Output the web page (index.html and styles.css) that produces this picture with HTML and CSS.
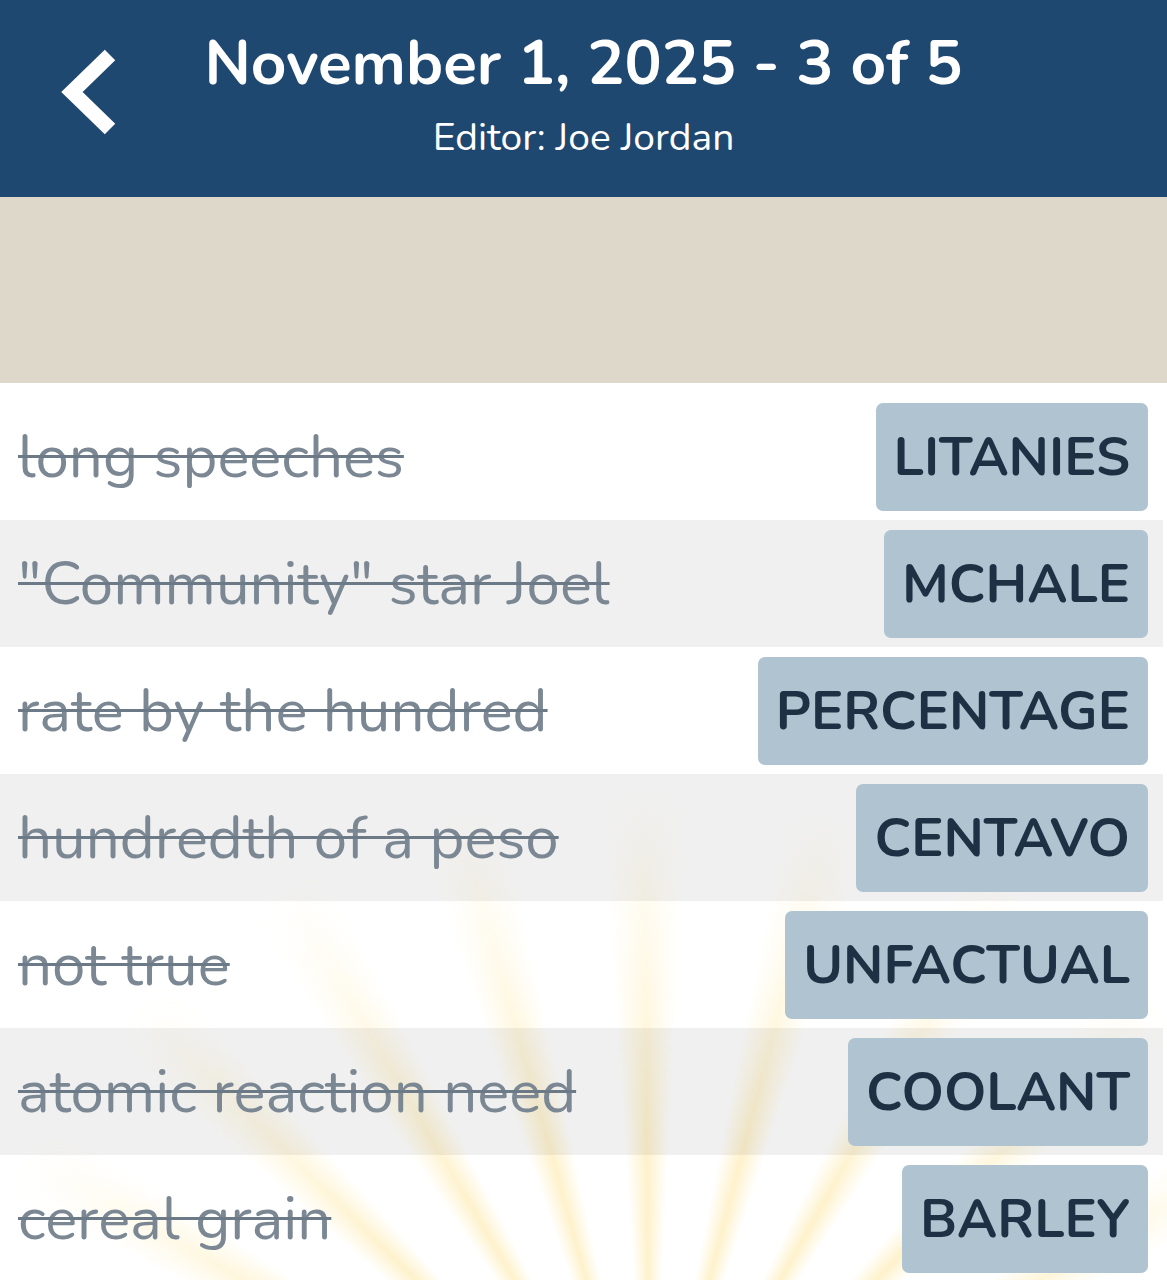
FILE: index.html
```html
<!DOCTYPE html>
<html>
<head>
<meta charset="utf-8">
<link rel="stylesheet" href="styles.css">
</head>
<body>
<header class="topbar">
  <button class="back" aria-label="Back">
    <svg width="60" height="90" viewBox="0 0 60 90"><path d="M51 8 L13 45 L51 82" fill="none" stroke="#fff" stroke-width="15" stroke-linejoin="miter"/></svg>
  </button>
  <div class="titles">
    <h1 class="title">November 1, 2025 - 3 of 5</h1>
    <div class="subtitle">Editor: Joe Jordan</div>
  </div>
</header>
<div class="band"></div>
<main class="list">
  <div class="rays"></div>
  <div class="row"><span class="clue">long speeches</span><span class="answer">LITANIES</span></div>
  <div class="row alt"><span class="clue">"Community" star Joel</span><span class="answer">MCHALE</span></div>
  <div class="row"><span class="clue">rate by the hundred</span><span class="answer">PERCENTAGE</span></div>
  <div class="row alt"><span class="clue">hundredth of a peso</span><span class="answer">CENTAVO</span></div>
  <div class="row"><span class="clue">not true</span><span class="answer">UNFACTUAL</span></div>
  <div class="row alt"><span class="clue">atomic reaction need</span><span class="answer">COOLANT</span></div>
  <div class="row"><span class="clue">cereal grain</span><span class="answer">BARLEY</span></div>
</main>
</body>
</html>
```
FILE: styles.css
```css
html, body {
  margin: 0;
  padding: 0;
  background: #fff;
  font-family: "Nunito", "Open Sans", "Noto Sans", sans-serif;
  overflow: hidden;
}
.topbar {
  height: 197px;
  background: #1f4871;
  display: flex;
  align-items: flex-start;
  position: relative;
}
.back {
  background: none;
  border: 0;
  padding: 0;
  margin: 47px 0 0 59px;
  width: 60px;
  height: 90px;
  display: block;
}
.back svg { display: block; }
.titles {
  flex: 1;
  text-align: center;
  color: #fff;
  margin-left: -119px;
  padding-top: 23px;
}
.title {
  margin: 0;
  font-size: 62px;
  font-weight: 700;
  line-height: 82px;
}
.subtitle {
  font-size: 39px;
  line-height: 50px;
  margin-top: 8px;
}
.band {
  height: 186px;
  background: #ded8cb;
}
.list {
  position: relative;
  background: #fff;
  padding-top: 10px;
  overflow: hidden;
}
.rays {
  position: absolute;
  left: 0;
  right: 0;
  top: 0;
  bottom: 0;
  pointer-events: none;
  background: repeating-conic-gradient(from -4deg at 650px 1127px,
      rgba(253, 226, 140, 0) 0deg,
      rgba(253, 226, 140, 0.45) 3.5deg,
      rgba(253, 226, 140, 0) 7deg,
      rgba(253, 226, 140, 0) 15deg);
  -webkit-mask-image: radial-gradient(circle at 650px 1127px, #000 0, #000 360px, transparent 720px);
  mask-image: radial-gradient(circle at 650px 1127px, #000 0, #000 360px, transparent 720px);
}
.row {
  position: relative;
  display: flex;
  align-items: center;
  justify-content: space-between;
  height: 127px;
  padding: 10px 19px 9px 18px;
  box-sizing: border-box;
}
.row.alt {
  background: rgba(0, 0, 0, 0.06);
  margin-right: 4px;
}
.row.alt .answer { margin-right: -4px; }
.clue {
  font-size: 60px;
  color: #7b8894;
  text-decoration: line-through;
  text-decoration-thickness: 3px;
  text-decoration-color: #6c7986;
  white-space: nowrap;
  line-height: 1;
}
.answer {
  align-self: stretch;
  display: flex;
  align-items: center;
  background: #afc3d1;
  color: #1e3043;
  font-weight: 700;
  font-size: 54px;
  padding: 0 18px;
  border-radius: 7px;
  white-space: nowrap;
}
```
